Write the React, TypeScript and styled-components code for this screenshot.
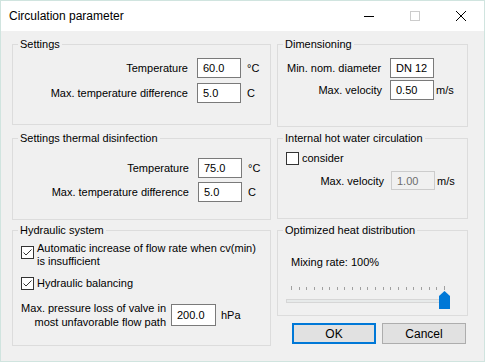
import styled, { createGlobalStyle } from "styled-components";

const GlobalStyle = createGlobalStyle`
  html, body {
    margin: 0;
    padding: 0;
    background: #ffffff;
  }
  body {
    font-family: "Liberation Sans", Arial, sans-serif;
    font-size: 11px;
    color: #000;
  }
`;

const Window = styled.div`
  width: 485px;
  height: 362px;
  box-sizing: border-box;
  border: 1px solid #d0e4df;
  background: #f0f0f0;
  display: flex;
  flex-direction: column;
`;

const TitleBar = styled.div`
  height: 30px;
  flex: none;
  background: #ffffff;
  display: flex;
  align-items: center;
`;

const Title = styled.div`
  flex: 1;
  padding-left: 8px;
  font-size: 12px;
`;

const Control = styled.div`
  width: 46px;
  height: 30px;
  display: flex;
  align-items: center;
  justify-content: center;
`;

const Body = styled.div`
  display: flex;
  gap: 6px;
  padding: 13px 0 0 11px;
`;

const Column = styled.div<{ $w: number }>`
  width: ${(p) => p.$w}px;
  display: flex;
  flex-direction: column;
`;

const Group = styled.div<{ $h: number; $mt?: number; $pt: number; $pl?: number }>`
  position: relative;
  box-sizing: border-box;
  height: ${(p) => p.$h}px;
  margin-top: ${(p) => p.$mt ?? 0}px;
  padding: ${(p) => p.$pt}px 0 0 ${(p) => p.$pl ?? 0}px;
  border: 1px solid #dcdcdc;
  display: flex;
  flex-direction: column;
`;

const Legend = styled.span`
  position: absolute;
  top: -7px;
  left: 5px;
  padding: 0 2px;
  line-height: 13px;
  background: #f0f0f0;
`;

const FieldRow = styled.div<{ $label: number; $gap: number; $mt?: number }>`
  display: grid;
  grid-template-columns: ${(p) => p.$label}px 44px auto;
  column-gap: ${(p) => p.$gap}px;
  align-items: center;
  margin-top: ${(p) => p.$mt ?? 0}px;
`;

const Label = styled.span<{ $left?: number; $right?: number; $align?: string }>`
  text-align: ${(p) => p.$align ?? "right"};
  padding-left: ${(p) => p.$left ?? 0}px;
  padding-right: ${(p) => p.$right ?? 0}px;
  white-space: nowrap;
`;

const Input = styled.div<{ $disabled?: boolean; $h?: number; $w?: number }>`
  box-sizing: border-box;
  width: ${(p) => (p.$w ? `${p.$w}px` : "auto")};
  height: ${(p) => p.$h ?? 20}px;
  padding-left: 5px;
  display: flex;
  align-items: center;
  background: ${(p) => (p.$disabled ? "#f0f0f0" : "#ffffff")};
  border: 1px solid ${(p) => (p.$disabled ? "#cccccc" : "#7a7a7a")};
  color: ${(p) => (p.$disabled ? "#6d6d6d" : "#000")};
`;

const Unit = styled.span`
  white-space: nowrap;
`;

const CheckRow = styled.div<{ $mt?: number }>`
  display: flex;
  align-items: flex-start;
  gap: 3px;
  margin-top: ${(p) => p.$mt ?? 0}px;
  line-height: 13px;
`;

const Box = styled.span<{ $mt?: number }>`
  flex: none;
  box-sizing: border-box;
  width: 13px;
  height: 13px;
  margin-top: ${(p) => p.$mt ?? 0}px;
  border: 1px solid #333333;
  background: #ffffff;
  display: flex;
  align-items: center;
  justify-content: center;
`;

const PressureRow = styled.div`
  display: flex;
  align-items: center;
  margin-top: 11px;
`;

const PressureLabel = styled.span`
  width: 145px;
  text-align: right;
  line-height: 14px;
  margin-right: 5px;
  white-space: nowrap;
`;

const PressureUnit = styled.span`
  margin-left: 5px;
`;

const VelocityRow = styled(FieldRow)`
  margin-left: -8px;
`;

const MixText = styled.div`
  padding-left: 13px;
  line-height: 13px;
`;

const Slider = styled.div`
  position: relative;
  width: 164px;
  height: 23px;
  margin: 17px 0 0 8px;
`;

const Ticks = styled.div`
  position: absolute;
  left: 5px;
  width: 154px;
  top: 0;
  display: flex;
  justify-content: space-between;
`;

const Tick = styled.span<{ $long?: boolean }>`
  width: 1px;
  height: ${(p) => (p.$long ? 4 : 3)}px;
  margin-top: ${(p) => (p.$long ? 0 : 1)}px;
  background: #a0a0a0;
`;

const Track = styled.div`
  position: absolute;
  left: 0;
  top: 13px;
  width: 160px;
  height: 4px;
  box-sizing: border-box;
  border: 1px solid #d6d6d6;
  background: #e7eaea;
`;

const Thumb = styled.svg`
  position: absolute;
  left: 153px;
  top: 5px;
`;

const Buttons = styled.div`
  display: flex;
  gap: 6px;
  margin-top: 7px;
  padding-left: 15px;
`;

const Button = styled.div<{ $primary?: boolean }>`
  box-sizing: border-box;
  width: 84px;
  height: 21px;
  display: flex;
  align-items: center;
  justify-content: center;
  background: #e1e1e1;
  border: ${(p) => (p.$primary ? "2px solid #0078d7" : "1px solid #adadad")};
  font-size: 12px;
`;

const Check = () => (
  <svg width="11" height="11" viewBox="0 0 11 11">
    <path d="M1.5 5.5 L4 8 L9.5 2.5" fill="none" stroke="#333" strokeWidth="1" />
  </svg>
);

export default function App() {
  const ticks = Array.from({ length: 21 }, (_, i) => i);
  return (
    <>
      <GlobalStyle />
      <Window>
        <TitleBar>
          <Title>Circulation parameter</Title>
          <Control>
            <svg width="10" height="10" viewBox="0 0 10 10">
              <path d="M0 5.5 H10" stroke="#000" strokeWidth="1" />
            </svg>
          </Control>
          <Control>
            <svg width="10" height="10" viewBox="0 0 10 10">
              <rect x="0.5" y="0.5" width="9" height="9" fill="none" stroke="#cccccc" />
            </svg>
          </Control>
          <Control>
            <svg width="10" height="10" viewBox="0 0 10 10">
              <path d="M0 0 L10 10 M10 0 L0 10" stroke="#000" strokeWidth="1" />
            </svg>
          </Control>
        </TitleBar>

        <Body>
          <Column $w={259}>
            <Group $h={81} $pt={13}>
              <Legend>Settings</Legend>
              <FieldRow $label={178} $gap={6}>
                <Label $right={3}>Temperature</Label>
                <Input>60.0</Input>
                <Unit>°C</Unit>
              </FieldRow>
              <FieldRow $label={178} $gap={6} $mt={5}>
                <Label $right={3}>Max. temperature difference</Label>
                <Input>5.0</Input>
                <Unit>C</Unit>
              </FieldRow>
            </Group>

            <Group $h={82} $mt={13} $pt={19}>
              <Legend>Settings thermal disinfection</Legend>
              <FieldRow $label={179} $gap={6}>
                <Label $right={3}>Temperature</Label>
                <Input>75.0</Input>
                <Unit>°C</Unit>
              </FieldRow>
              <FieldRow $label={179} $gap={6} $mt={4}>
                <Label $right={3}>Max. temperature difference</Label>
                <Input>5.0</Input>
                <Unit>C</Unit>
              </FieldRow>
            </Group>

            <Group $h={116} $mt={10} $pt={11} $pl={8}>
              <Legend>Hydraulic system</Legend>
              <CheckRow>
                <Box $mt={4}>
                  <Check />
                </Box>
                <span>
                  Automatic increase of flow rate when cv(min)
                  <br />
                  is insufficient
                </span>
              </CheckRow>
              <CheckRow $mt={9}>
                <Box>
                  <Check />
                </Box>
                <span>Hydraulic balancing</span>
              </CheckRow>
              <PressureRow>
                <PressureLabel>
                  Max. pressure loss of valve in
                  <br />
                  most unfavorable flow path
                </PressureLabel>
                <Input $w={45} $h={22}>
                  200.0
                </Input>
                <PressureUnit>hPa</PressureUnit>
              </PressureRow>
            </Group>
          </Column>

          <Column $w={191}>
            <Group $h={83} $pt={13}>
              <Legend>Dimensioning</Legend>
              <FieldRow $label={110} $gap={2}>
                <Label $align="left" $left={9}>
                  Min. nom. diameter
                </Label>
                <Input>DN 12</Input>
                <Unit />
              </FieldRow>
              <FieldRow $label={110} $gap={2} $mt={2}>
                <Label $right={6}>Max. velocity</Label>
                <Input>0.50</Input>
                <Unit>m/s</Unit>
              </FieldRow>
            </Group>

            <Group $h={81} $mt={11} $pt={13} $pl={8}>
              <Legend>Internal hot water circulation</Legend>
              <CheckRow>
                <Box />
                <span>consider</span>
              </CheckRow>
              <VelocityRow $label={111} $gap={2} $mt={6}>
                <Label $right={5}>Max. velocity</Label>
                <Input $disabled $h={19}>
                  1.00
                </Input>
                <Unit>m/s</Unit>
              </VelocityRow>
            </Group>

            <Group $h={86} $mt={11} $pt={25}>
              <Legend>Optimized heat distribution</Legend>
              <MixText>Mixing rate: 100%</MixText>
              <Slider>
                <Ticks>
                  {ticks.map((i) => (
                    <Tick key={i} $long={i === 0 || i === 20} />
                  ))}
                </Ticks>
                <Track />
                <Thumb width="11" height="18" viewBox="0 0 11 18">
                  <polygon points="0,5 5.5,0 11,5 11,18 0,18" fill="#0078d7" />
                </Thumb>
              </Slider>
            </Group>

            <Buttons>
              <Button $primary>OK</Button>
              <Button>Cancel</Button>
            </Buttons>
          </Column>
        </Body>
      </Window>
    </>
  );
}
